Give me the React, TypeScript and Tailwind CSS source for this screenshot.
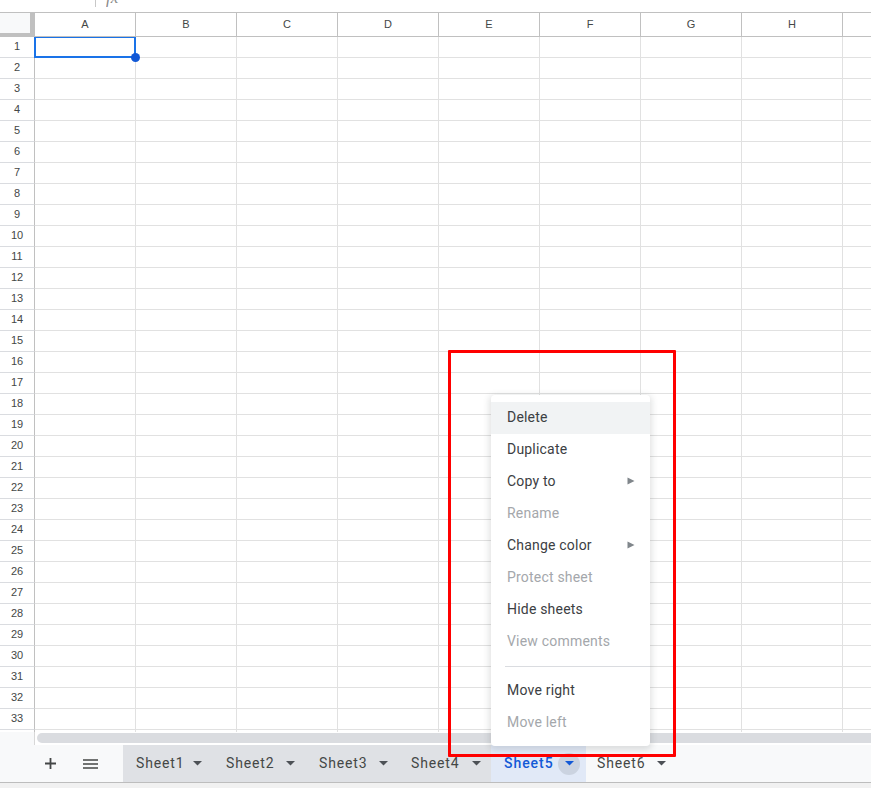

const cols = ["A", "B", "C", "D", "E", "F", "G", "H", ""];
const rows = Array.from({ length: 33 }, (_, i) => i + 1);
const tabs = [
  { name: "Sheet1", w: "w-[90px]", label: "w-[57px]" },
  { name: "Sheet2", w: "w-[93px]", label: "w-[60px]" },
  { name: "Sheet3", w: "w-[92px]", label: "w-[60px]" },
  { name: "Sheet4", w: "w-[93px]", label: "w-[61px]" },
];

type Item = { label: string; off?: boolean; sub?: boolean; hover?: boolean };
const menuA: Item[] = [
  { label: "Delete", hover: true },
  { label: "Duplicate" },
  { label: "Copy to", sub: true },
  { label: "Rename", off: true },
  { label: "Change color", sub: true },
  { label: "Protect sheet", off: true },
  { label: "Hide sheets" },
  { label: "View comments", off: true },
];
const menuB: Item[] = [{ label: "Move right" }, { label: "Move left", off: true }];

function MenuRow({ item }: { item: Item }) {
  return (
    <div
      className={`flex h-8 items-center justify-between pb-[2px] pl-[16px] pr-[15px] text-[14px] tracking-[0.2px] ${
        item.off ? "text-[#a4a7ab]" : "text-[#3c4043]"
      } ${item.hover ? "bg-[#f1f3f4]" : ""}`}
    >
      <span>{item.label}</span>
      {item.sub && (
        <svg width="8" height="8" viewBox="0 0 8 8">
          <path d="M0.5 0.5 L7.5 4 L0.5 7.5 Z" fill="#80868b" />
        </svg>
      )}
    </div>
  );
}

function Caret({ color = "#4d5156" }: { color?: string }) {
  return (
    <svg width="9" height="5" viewBox="0 0 9 5">
      <path d="M0 0 H9 L4.5 4.5 Z" fill={color} />
    </svg>
  );
}

export default function App() {
  return (
    <div className="relative flex h-[788px] w-[871px] flex-col overflow-hidden bg-white font-['Liberation_Sans',sans-serif] text-[#3c4043]">
      {/* formula bar sliver */}
      <div className="flex h-[12px] shrink-0 items-start overflow-hidden">
        <div className="relative h-[7px] w-[96px] shrink-0 overflow-hidden border-r border-[#c8c8c8]">
          <span className="absolute left-[3px] top-[-10px] text-[12px] leading-[12px] text-[#444]">A1</span>
        </div>
        <div className="relative ml-[10px] h-[7px] w-[16px] overflow-hidden">
          <span className="absolute left-0 top-[-11px] font-['Liberation_Serif',serif] text-[17px] italic leading-[17px] text-[#8a8a8a]">
            fx
          </span>
        </div>
      </div>

      {/* column header */}
      <div className="flex h-[25px] shrink-0 border-y border-[#c0c0c0] bg-white">
        <div className="relative h-full w-[35px] shrink-0 border-r border-[#c0c0c0] bg-[#f8f9fa]">
          <div className="absolute bottom-0 right-0 top-0 w-[4px] bg-[#c0c0c0]" />
          <div className="absolute bottom-0 left-0 right-0 h-[3px] bg-[#c0c0c0]" />
        </div>
        {cols.map((c, i) => (
          <div
            key={i}
            className="flex h-full w-[101px] shrink-0 items-center justify-center border-r border-[#c0c0c0] text-[11px] text-[#444746]"
          >
            {c}
          </div>
        ))}
      </div>

      {/* cells */}
      <div className="h-[695px] shrink-0 overflow-hidden">
        {rows.map((r) => (
          <div key={r} className="flex h-[21px]">
            <div className="flex w-[35px] shrink-0 items-center justify-center border-b border-r border-b-[#dadce0] border-r-[#c0c0c0] pb-[1px] text-[11px] text-[#444746]">
              {r}
            </div>
            {cols.map((_, i) => (
              <div key={i} className="relative w-[101px] shrink-0 border-b border-r border-[#e1e1e1]">
                {r === 1 && i === 0 && (
                  <>
                    <div className="absolute -inset-[1px] border-2 border-[#1a73e8]" />
                    <div className="absolute -bottom-[5px] -right-[5px] z-10 h-[9px] w-[9px] rounded-full bg-[#1259d6]" />
                  </>
                )}
              </div>
            ))}
          </div>
        ))}
        <div className="flex h-[3px]">
          <div className="w-[35px] shrink-0 border-r border-[#c0c0c0]" />
          {cols.map((_, i) => (
            <div key={i} className="w-[101px] shrink-0 border-r border-[#e1e1e1]" />
          ))}
        </div>
      </div>

      {/* scrollbar */}
      <div className="flex h-[13px] shrink-0 bg-white">
        <div className="h-full w-[35px] shrink-0 border-r border-[#d8d8d8] bg-[#f8f9fa]" />
        <div className="mb-[2px] ml-[2px] mt-[1px] flex-1 rounded-l-[5px] bg-[#dadce0]" />
      </div>

      {/* tab bar */}
      <div className="flex h-[38px] shrink-0 items-center border-b border-[#bdbdbd] bg-[#f8f9fa] font-['Roboto',sans-serif] text-[14px] tracking-[0.85px] text-[#444746]">
        <div className="flex h-full w-[123px] shrink-0 items-center">
          <svg width="11" height="11" viewBox="0 0 11 11" className="ml-[45px]">
            <path d="M4.6 0h1.8v4.6H11v1.8H6.4V11H4.6V6.4H0V4.6h4.6z" fill="#444746" />
          </svg>
          <svg width="15" height="10" viewBox="0 0 15 10" className="ml-[27px]">
            <path d="M0 1h15M0 5h15M0 9h15" stroke="#444746" strokeWidth="1.4" />
          </svg>
        </div>
        <div className="flex h-full w-[368px] shrink-0 bg-[#dfe1e5]">
          {tabs.map((t) => (
            <div key={t.name} className={`flex h-full shrink-0 items-center pl-[13px] ${t.w}`}>
              <span className={t.label}>{t.name}</span>
              <Caret />
            </div>
          ))}
        </div>
        <div className="flex h-full w-[95px] shrink-0 items-center bg-[#e1e9f7] pl-[13px] font-medium tracking-[0.95px] text-[#1259d6]">
          <span className="w-[54px]">Sheet5</span>
          <div className="flex h-[22px] w-[22px] items-center justify-center rounded-full bg-[#cbd3e0]">
            <Caret color="#1259d6" />
          </div>
        </div>
        <div className="flex h-full items-center pl-[11px]">
          <span className="w-[60px]">Sheet6</span>
          <Caret />
        </div>
      </div>
      <div className="flex-1 bg-[#f1f1f1]" />

      {/* context menu */}
      <div className="absolute left-[491px] top-[395px] z-20 w-[159px] rounded-[4px] bg-white py-[7px] font-['Roboto',sans-serif] shadow-[0_2px_6px_2px_rgba(60,64,67,0.15)]">
        {menuA.map((m) => (
          <MenuRow key={m.label} item={m} />
        ))}
        <div className="my-[8px] ml-[14px] h-px bg-[#dadce0]" />
        {menuB.map((m) => (
          <MenuRow key={m.label} item={m} />
        ))}
      </div>

      {/* red annotation rectangle */}
      <div className="absolute left-[448px] top-[350px] z-30 h-[407px] w-[228px] rounded-[1px] border-[3px] border-[#ff0000]" />
    </div>
  );
}
